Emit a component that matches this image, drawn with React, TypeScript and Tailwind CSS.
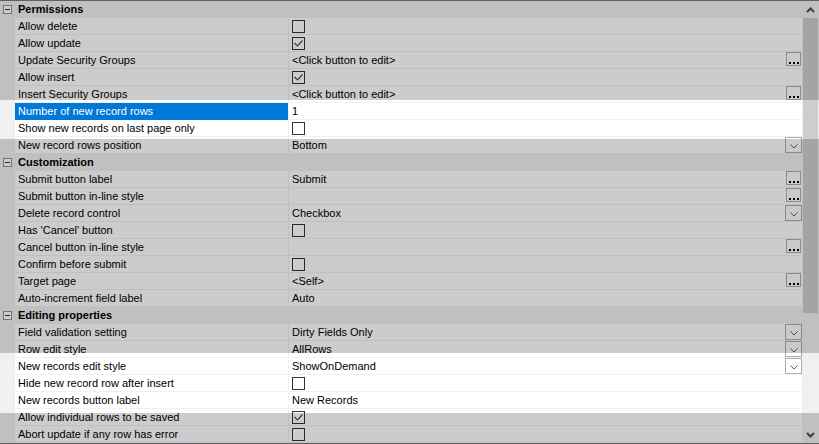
import React from "react";

type Value =
  | { kind: "text"; text: string }
  | { kind: "check"; checked: boolean };

type Prop = {
  label: string;
  value: Value;
  button?: "more" | "drop";
  selected?: boolean;
};

type Section = { title: string; props: Prop[] };

const txt = (text: string): Value => ({ kind: "text", text });
const chk = (checked: boolean): Value => ({ kind: "check", checked });

const sections: Section[] = [
  {
    title: "Permissions",
    props: [
      { label: "Allow delete", value: chk(false) },
      { label: "Allow update", value: chk(true) },
      { label: "Update Security Groups", value: txt("<Click button to edit>"), button: "more" },
      { label: "Allow insert", value: chk(true) },
      { label: "Insert Security Groups", value: txt("<Click button to edit>"), button: "more" },
      { label: "Number of new record rows", value: txt("1"), selected: true },
      { label: "Show new records on last page only", value: chk(false) },
      { label: "New record rows position", value: txt("Bottom"), button: "drop" },
    ],
  },
  {
    title: "Customization",
    props: [
      { label: "Submit button label", value: txt("Submit"), button: "more" },
      { label: "Submit button in-line style", value: txt(""), button: "more" },
      { label: "Delete record control", value: txt("Checkbox"), button: "drop" },
      { label: "Has 'Cancel' button", value: chk(false) },
      { label: "Cancel button in-line style", value: txt(""), button: "more" },
      { label: "Confirm before submit", value: chk(false) },
      { label: "Target page", value: txt("<Self>"), button: "more" },
      { label: "Auto-increment field label", value: txt("Auto") },
    ],
  },
  {
    title: "Editing properties",
    props: [
      { label: "Field validation setting", value: txt("Dirty Fields Only"), button: "drop" },
      { label: "Row edit style", value: txt("AllRows"), button: "drop" },
      { label: "New records edit style", value: txt("ShowOnDemand"), button: "drop" },
      { label: "Hide new record row after insert", value: chk(false) },
      { label: "New records button label", value: txt("New Records") },
      { label: "Allow individual rows to be saved", value: chk(true) },
      { label: "Abort update if any row has error", value: chk(false) },
    ],
  },
];

const CheckBox = ({ checked }: { checked: boolean }) => (
  <div className="w-[13px] h-[13px] border border-[#333333] bg-white">
    {checked && (
      <svg width="11" height="11" viewBox="0 0 11 11">
        <polyline points="1.5,5 4.5,8 9.5,2.5" fill="none" stroke="#4a4a4a" strokeWidth="1.2" />
      </svg>
    )}
  </div>
);

const MoreButton = () => (
  <div className="ml-auto mr-px w-[15px] h-[14px] border border-[#adadad] bg-[#fdfdfd] flex items-end justify-center gap-[2px] pb-[1px]">
    <span className="w-[2px] h-[2px] bg-black" />
    <span className="w-[2px] h-[2px] bg-black" />
    <span className="w-[2px] h-[2px] bg-black" />
  </div>
);

const DropButton = () => (
  <div className="ml-auto w-[17px] h-[16px] border border-[#adadad] bg-[#fdfdfd] flex items-end justify-center pb-[3px]">
    <svg width="8" height="5" viewBox="0 0 8 5">
      <polyline points="0.5,0.5 4,4 7.5,0.5" fill="none" stroke="#606060" strokeWidth="1" />
    </svg>
  </div>
);

const CategoryRow = ({ title }: { title: string }) => (
  <div className="flex h-[17px] bg-[#f0f0f0]">
    <div className="w-[15px] flex items-center justify-center">
      <div className="w-[9px] h-[9px] border border-[#919191] bg-white flex items-center justify-center">
        <span className="w-[5px] h-px bg-[#333333]" />
      </div>
    </div>
    <div className="pl-[3px] flex items-center font-bold">{title}</div>
  </div>
);

const PropRow = ({ prop }: { prop: Prop }) => (
  <div className="flex h-[17px]">
    <div className="w-[15px] bg-[#f0f0f0]" />
    <div
      className={
        prop.selected
          ? "w-[273px] flex items-center pl-[3px] bg-[#0078d7] text-white"
          : "w-[273px] flex items-center pl-[3px] bg-white border-b border-[#f0f0f0]"
      }
    >
      {prop.label}
    </div>
    <div className="w-px bg-[#f0f0f0]" />
    <div className="flex-1 flex items-start bg-white border-b border-[#f0f0f0]">
      <div className="h-[16px] flex items-center pl-[3px]">
        {prop.value.kind === "check" ? (
          <CheckBox checked={prop.value.checked} />
        ) : (
          <span>{prop.value.text}</span>
        )}
      </div>
      {prop.button === "more" && <MoreButton />}
      {prop.button === "drop" && <DropButton />}
    </div>
  </div>
);

const ScrollBar = () => (
  <div className="w-[17px] flex flex-col bg-[#f0f0f0]">
    <div className="h-[17px] flex items-center justify-center">
      <svg width="9" height="6" viewBox="0 0 9 6">
        <polyline points="1,5 4.5,1.5 8,5" fill="none" stroke="#505050" strokeWidth="2" />
      </svg>
    </div>
    <div className="flex-1">
      <div className="mx-px h-[295px] bg-[#cdcdcd]" />
    </div>
    <div className="h-[17px] flex items-center justify-center">
      <svg width="9" height="6" viewBox="0 0 9 6">
        <polyline points="1,1 4.5,4.5 8,1" fill="none" stroke="#505050" strokeWidth="2" />
      </svg>
    </div>
  </div>
);

export default function App() {
  return (
    <div className="relative w-[819px] h-[444px] font-['Liberation_Sans',Arial,sans-serif] text-[11px] leading-none text-black">
      <div className="h-full flex border-y border-[#767a80] bg-white">
        <div className="flex-1 flex flex-col">
          {sections.map((s) => (
            <React.Fragment key={s.title}>
              <CategoryRow title={s.title} />
              {s.props.map((p) => (
                <PropRow key={p.label} prop={p} />
              ))}
            </React.Fragment>
          ))}
        </div>
        <ScrollBar />
      </div>

      {/* dim layer: everything outside the two bands */}
      <div className="absolute inset-x-0 top-0 h-[100px] bg-black/20" />
      <div className="absolute inset-x-0 top-[139px] h-[214px] bg-black/20" />
      <div className="absolute inset-x-0 top-[413px] bottom-0 bg-black/20" />
    </div>
  );
}
